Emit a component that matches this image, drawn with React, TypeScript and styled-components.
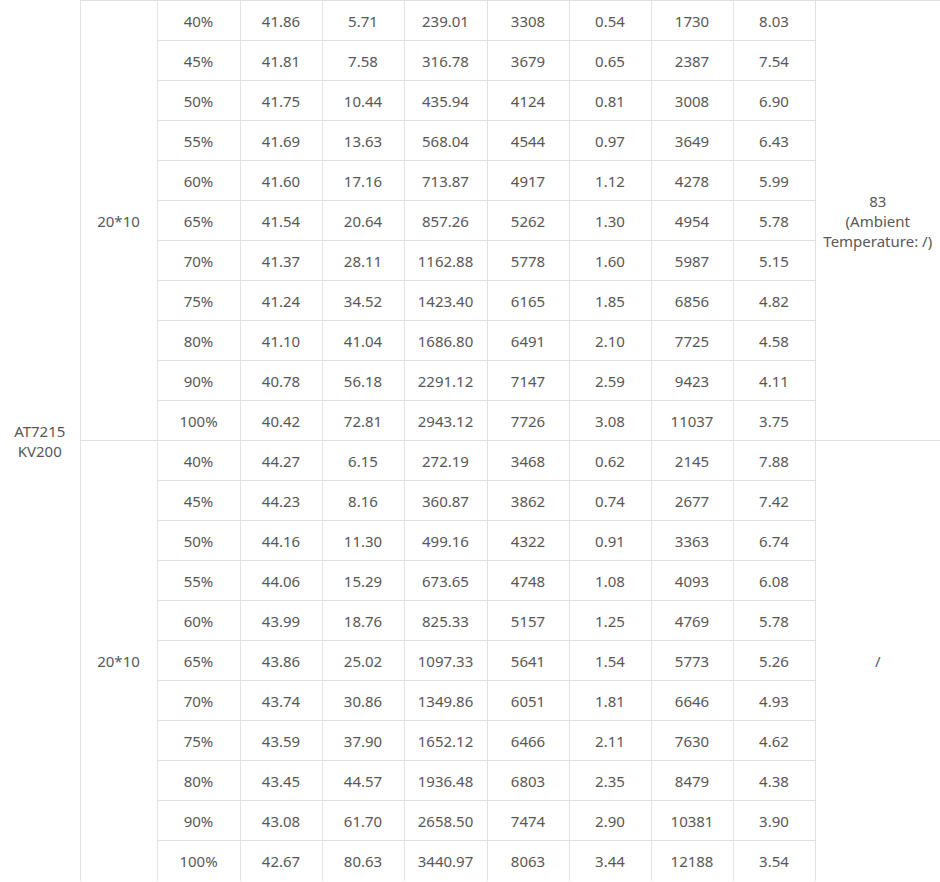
import React from "react"
import styled, { createGlobalStyle } from "styled-components"

const GlobalStyle = createGlobalStyle`
  html, body {
    margin: 0;
    padding: 0;
    background: #fff;
  }
  body {
    font-family: "Noto Sans", Roboto, "Liberation Sans", sans-serif;
    overflow: hidden;
  }
`

type Group = {
  size: string;
  note: string[];
  rows: string[][];
}

const groups: Group[] = [
  {
    size: "20*10",
    note: ["83", "(Ambient", "Temperature: /)"],
    rows: [
      ["40%", "41.86", "5.71", "239.01", "3308", "0.54", "1730", "8.03"],
      ["45%", "41.81", "7.58", "316.78", "3679", "0.65", "2387", "7.54"],
      ["50%", "41.75", "10.44", "435.94", "4124", "0.81", "3008", "6.90"],
      ["55%", "41.69", "13.63", "568.04", "4544", "0.97", "3649", "6.43"],
      ["60%", "41.60", "17.16", "713.87", "4917", "1.12", "4278", "5.99"],
      ["65%", "41.54", "20.64", "857.26", "5262", "1.30", "4954", "5.78"],
      ["70%", "41.37", "28.11", "1162.88", "5778", "1.60", "5987", "5.15"],
      ["75%", "41.24", "34.52", "1423.40", "6165", "1.85", "6856", "4.82"],
      ["80%", "41.10", "41.04", "1686.80", "6491", "2.10", "7725", "4.58"],
      ["90%", "40.78", "56.18", "2291.12", "7147", "2.59", "9423", "4.11"],
      ["100%", "40.42", "72.81", "2943.12", "7726", "3.08", "11037", "3.75"]
    ]
  },
  {
    size: "20*10",
    note: ["/"],
    rows: [
      ["40%", "44.27", "6.15", "272.19", "3468", "0.62", "2145", "7.88"],
      ["45%", "44.23", "8.16", "360.87", "3862", "0.74", "2677", "7.42"],
      ["50%", "44.16", "11.30", "499.16", "4322", "0.91", "3363", "6.74"],
      ["55%", "44.06", "15.29", "673.65", "4748", "1.08", "4093", "6.08"],
      ["60%", "43.99", "18.76", "825.33", "5157", "1.25", "4769", "5.78"],
      ["65%", "43.86", "25.02", "1097.33", "5641", "1.54", "5773", "5.26"],
      ["70%", "43.74", "30.86", "1349.86", "6051", "1.81", "6646", "4.93"],
      ["75%", "43.59", "37.90", "1652.12", "6466", "2.11", "7630", "4.62"],
      ["80%", "43.45", "44.57", "1936.48", "6803", "2.35", "8479", "4.38"],
      ["90%", "43.08", "61.70", "2658.50", "7474", "2.90", "10381", "3.90"],
      ["100%", "42.67", "80.63", "3440.97", "8063", "3.44", "12188", "3.54"]
    ]
  }
]

const colWidths = [80, 77, 83, 82, 82, 83, 82, 82, 82, 82, 125]
const totalRows = groups.reduce((n, g) => n + g.rows.length, 0)

const Table = styled.table`
  width: 940px;
  table-layout: fixed;
  border-collapse: collapse;
  color: #585858;
  font-size: 15px;
  line-height: 20px;
`

const Row = styled.tr`
  height: 40px;
`

// $open: the table runs on past the bottom of the view, so no closing line
const Cell = styled.td<{ $open?: boolean }>`
  border: 1px solid #e2e2e2;
  border-bottom: ${(p) => (p.$open ? "none" : "1px solid #e2e2e2")};
  padding: 0 4px;
  text-align: center;
  vertical-align: middle;
  white-space: nowrap;
`

const ModelCell = styled(Cell)`
  border-top: none;
  border-left: none;
  border-bottom: none;
`

const NoteCell = styled(Cell)`
  border-right: none;
`

const App = () => (
  <>
    <GlobalStyle />
    <Table>
      <colgroup>
        {colWidths.map((w, i) => (
          <col key={i} style={{ width: w }} />
        ))}
      </colgroup>
      <tbody>
        {groups.map((g, gi) => {
          const lastGroup = gi === groups.length - 1
          return g.rows.map((r, ri) => {
            const lastRow = lastGroup && ri === g.rows.length - 1
            return (
              <Row key={`${gi}-${ri}`}>
                {gi === 0 && ri === 0 && (
                  <ModelCell rowSpan={totalRows}>
                    AT7215
                    <br />
                    KV200
                  </ModelCell>
                )}
                {ri === 0 && (
                  <Cell rowSpan={g.rows.length} $open={lastGroup}>
                    {g.size}
                  </Cell>
                )}
                {r.map((v, ci) => (
                  <Cell key={ci} $open={lastRow}>
                    {v}
                  </Cell>
                ))}
                {ri === 0 && (
                  <NoteCell rowSpan={g.rows.length} $open={lastGroup}>
                    {g.note.map((line, li) => (
                      <React.Fragment key={li}>
                        {li > 0 && <br />}
                        {line}
                      </React.Fragment>
                    ))}
                  </NoteCell>
                )}
              </Row>
            )
          })
        })}
      </tbody>
    </Table>
  </>
)

export default App
